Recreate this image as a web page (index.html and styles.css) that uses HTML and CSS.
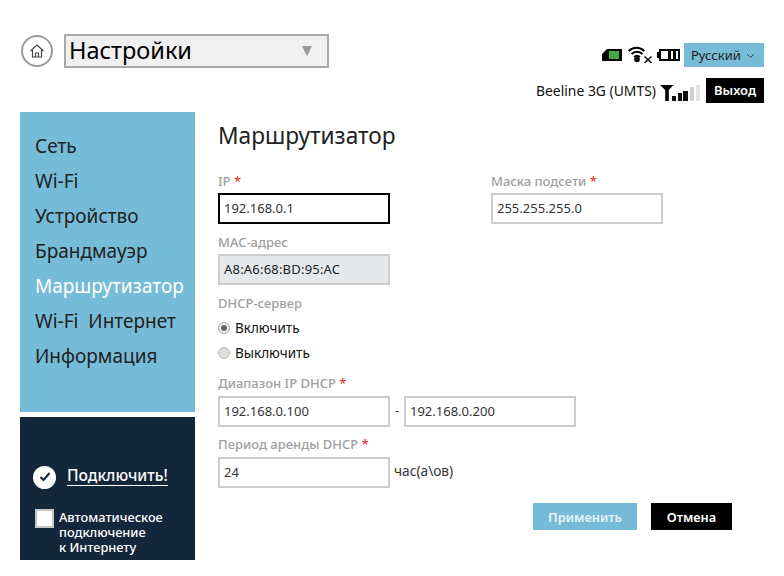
FILE: index.html
```html
<!DOCTYPE html>
<html lang="ru">
<head>
<meta charset="utf-8">
<title>Настройки</title>
<link rel="stylesheet" href="styles.css">
</head>
<body>
<header class="top">
  <div class="top-left">
    <span class="home">
      <svg width="16" height="16" viewBox="0 0 16 16" fill="none" stroke="#444" stroke-width="1.200"><path d="M1.500 8 8 2l6.500 6M3.500 7v7h9V7M6.500 14v-4h3v4"/></svg>
    </span>
    <div class="page-select"><span>Настройки</span><i class="tri"></i></div>
  </div>
  <div class="top-right">
    <div class="status-row">
      <svg class="ic-sim" width="20" height="12" viewBox="0 0 20 12"><path d="M5 0h15v12H0V5z" fill="#000"/><rect x="7" y="2" width="10" height="8" fill="#3fae3f"/></svg>
      <svg class="ic-wifi" width="24" height="18" viewBox="0 0 24 18" fill="none" stroke="#000" stroke-width="2"><path d="M0.700 6C5 1.500 12 1.500 16.300 6M3.500 9c3-3 8-3 11 0M6 12c1.700-1.500 4.300-1.500 6 0"/><circle cx="9" cy="14.500" r="2.800" fill="#000" stroke="none"/><path d="m16.500 11.500 7 6.500M23.500 11.500l-7 6.500" stroke-width="1.400"/></svg>
      <svg class="ic-bat" width="23" height="12" viewBox="0 0 23 12"><path d="M2 0h21v12H2zM0 3h2v6H0z" fill="#000"/><rect x="4" y="2" width="17" height="8" fill="#fff"/><rect x="11" y="2" width="3" height="8" fill="#000"/><rect x="16" y="2" width="3" height="8" fill="#000"/></svg>
      <div class="lang">Русский <svg width="9" height="6" viewBox="0 0 9 6" fill="none" stroke="#444"><path d="m1 1 3.500 3.500L8 1"/></svg></div>
    </div>
    <div class="net-row">
      <span class="net">Beeline 3G (UMTS)</span>
      <svg class="ic-signal" width="41" height="17" viewBox="0 0 41 17"><path d="M0 1h13.500L8.800 6v11H5.200V6z" fill="#000"/><rect x="12" y="12" width="4" height="5" fill="#111"/><rect x="18" y="9" width="4" height="8" fill="#111"/><rect x="23" y="7" width="5" height="10" fill="#111"/><rect x="30" y="3" width="4" height="14" fill="#d0d0d0"/><rect x="36" y="1" width="4" height="16" fill="#e4e4e4"/></svg>
      <div class="logout">Выход</div>
    </div>
  </div>
</header>
<div class="layout">
  <aside class="side">
    <nav class="menu">
      <a>Сеть</a>
      <a>Wi-Fi</a>
      <a>Устройство</a>
      <a>Брандмауэр</a>
      <a class="active">Маршрутизатор</a>
      <a class="wide">Wi-Fi&nbsp; Интернет</a>
      <a>Информация</a>
    </nav>
    <div class="connect">
      <div class="conn-row">
        <span class="check"><svg width="12" height="10" viewBox="0 0 12 10" fill="none" stroke="#14263a" stroke-width="2"><path d="m1.500 5 3 3 6-7"/></svg></span>
        <span class="conn-link">Подключить!</span>
      </div>
      <div class="auto-row">
        <span class="box"></span>
        <span class="auto-text">Автоматическое<br>подключение<br>к Интернету</span>
      </div>
    </div>
  </aside>
  <main class="main">
    <h1 class="title">Маршрутизатор</h1>
    <div class="two">
      <div class="field">
        <div class="label">IP <b>*</b></div>
        <div class="input focus">192.168.0.1</div>
      </div>
      <div class="field">
        <div class="label">Маска подсети <b>*</b></div>
        <div class="input">255.255.255.0</div>
      </div>
    </div>
    <div class="field gap">
      <div class="label">MAC-адрес</div>
      <div class="input off">A8:A6:68:BD:95:AC</div>
    </div>
    <div class="label gap">DHCP-сервер</div>
    <div class="radio first"><i class="dot on"></i>Включить</div>
    <div class="radio"><i class="dot"></i>Выключить</div>
    <div class="field gap2">
      <div class="label">Диапазон IP DHCP <b>*</b></div>
      <div class="range">
        <div class="input">192.168.0.100</div>
        <span class="dash">-</span>
        <div class="input">192.168.0.200</div>
      </div>
    </div>
    <div class="field gap3">
      <div class="label">Период аренды DHCP <b>*</b></div>
      <div class="range">
        <div class="input">24</div>
        <span class="unit">час(а\ов)</span>
      </div>
    </div>
    <div class="actions">
      <button class="btn apply">Применить</button>
      <button class="btn cancel">Отмена</button>
    </div>
  </main>
</div>
</body>
</html>
```
FILE: styles.css
```css
* { box-sizing: border-box; }
html, body { margin: 0; padding: 0; }
body { width: 784px; height: 576px; overflow: hidden; background: #fff; color: #000; font-family: "Noto Sans", "Open Sans", sans-serif; font-size: 13px; }

.top { display: flex; justify-content: space-between; height: 112px; padding: 34px 20px 0 21px; }
.top-left { display: flex; align-items: flex-start; gap: 11px; }
.home { width: 32px; height: 32px; margin-top: 1px; border: 2px solid #999; border-radius: 50%; display: flex; align-items: center; justify-content: center; }
.page-select { width: 265px; height: 34px; border: 2px solid #a9a9a9; background: #f0f0f0; display: flex; align-items: center; justify-content: space-between; padding: 0 15px 2px 3px; font-size: 23.500px; line-height: 30px; }
.tri { width: 0; height: 0; margin-top: 2px; border-left: 5px solid transparent; border-right: 5px solid transparent; border-top: 10px solid #999; }

.top-right { display: flex; flex-direction: column; align-items: flex-end; padding-top: 9px; }
.status-row { display: flex; align-items: center; height: 24px; }
.ic-sim { margin-right: 6px; }
.ic-wifi { margin: -2px 5px 0 0; }
.ic-bat { margin-right: 4px; }
.lang { width: 80px; height: 24px; background: #76bcd9; font-size: 13px; line-height: 24px; padding-left: 7px; color: #222; white-space: nowrap; }
.lang svg { margin-left: 2px; vertical-align: 1px; }
.net-row { display: flex; align-items: flex-start; height: 25px; margin-top: 11px; }
.net { font-size: 13.900px; line-height: 24px; margin-top: 1px; color: #111; }
.ic-signal { margin: 6px 5px 0 4px; }
.logout { width: 58px; height: 25px; background: #000; color: #fff; font-size: 13px; font-weight: 600; line-height: 24px; text-align: center; }

.layout { display: flex; align-items: flex-start; padding-left: 20px; }
.side { width: 175px; flex: none; }
.menu { height: 300px; background: #76bcd9; padding-top: 17px; display: flex; flex-direction: column; }
.menu a { height: 35px; line-height: 35px; padding-left: 15px; font-size: 19px; color: #222; white-space: nowrap; }
.menu a.active { color: #fff; }
.connect { height: 143px; margin-top: 5px; background: #14263a; color: #fff; padding: 48px 0 0 13px; }
.conn-row { display: flex; align-items: center; gap: 11px; height: 24px; }
.check { width: 23px; height: 23px; border-radius: 50%; background: #fff; display: flex; align-items: center; justify-content: center; }
.conn-link { font-size: 15.600px; font-weight: 500; border-bottom: 1px solid #fff; line-height: 20px; margin-top: -4px; }
.auto-row { display: flex; gap: 5px; margin: 20px 0 0 2px; }
.box { width: 19px; height: 19px; background: #fff; border: 2px solid #c8c4bd; flex: none; }
.auto-text { font-size: 12.800px; font-weight: 500; line-height: 15px; margin-top: 1px; }

.main { margin-left: 23px; flex: 1; }
.title { margin: 8px 0 0; font-size: 22.700px; font-weight: 400; line-height: 32px; color: #222; }
.two { display: flex; gap: 101px; margin-top: 20px; }
.label { font-size: 13px; line-height: 18px; height: 18px; color: #a0a0a0; font-weight: 500; }
.label b { color: #e22; font-weight: 400; }
.input { width: 172px; height: 31px; margin-top: 3px; border: 2px solid #ccc; background: #fff; color: #333; font-size: 13px; line-height: 27px; padding-left: 4px; }
.input.focus { border-color: #000; }
.input.off { background: #e6e9ec; color: #222; letter-spacing: 0.200px; }
.gap { margin-top: 9px; }
.gap2 { margin-top: 9px; }
.range .input { margin-top: 4px; }
.gap3 { margin-top: 8px; }
.radio { display: flex; align-items: center; gap: 5px; font-size: 13.500px; height: 25px; color: #111; }
.radio.first { margin-top: 3px; }
.dot { width: 12px; height: 12px; border-radius: 50%; border: 1px solid #bbb; background: #ddd; display: block; position: relative; }
.dot.on { background: #eee; border-color: #aaa; }
.dot.on::after { content: ""; position: absolute; left: 2px; top: 2px; width: 6px; height: 6px; border-radius: 50%; background: #666; }
.range { display: flex; align-items: center; }
.dash { width: 14px; text-align: center; color: #333; }
.unit { margin-left: 4px; color: #333; font-size: 13.700px; }
.actions { display: flex; gap: 14px; margin: 15px 0 0 315px; }
.btn { height: 27px; border: 0; padding: 0; font-family: inherit; font-size: 12.800px; font-weight: 600; }
.apply { width: 104px; background: #76bcd9; color: #e8f4f8; }
.cancel { width: 81px; background: #000; color: #fff; }
```
